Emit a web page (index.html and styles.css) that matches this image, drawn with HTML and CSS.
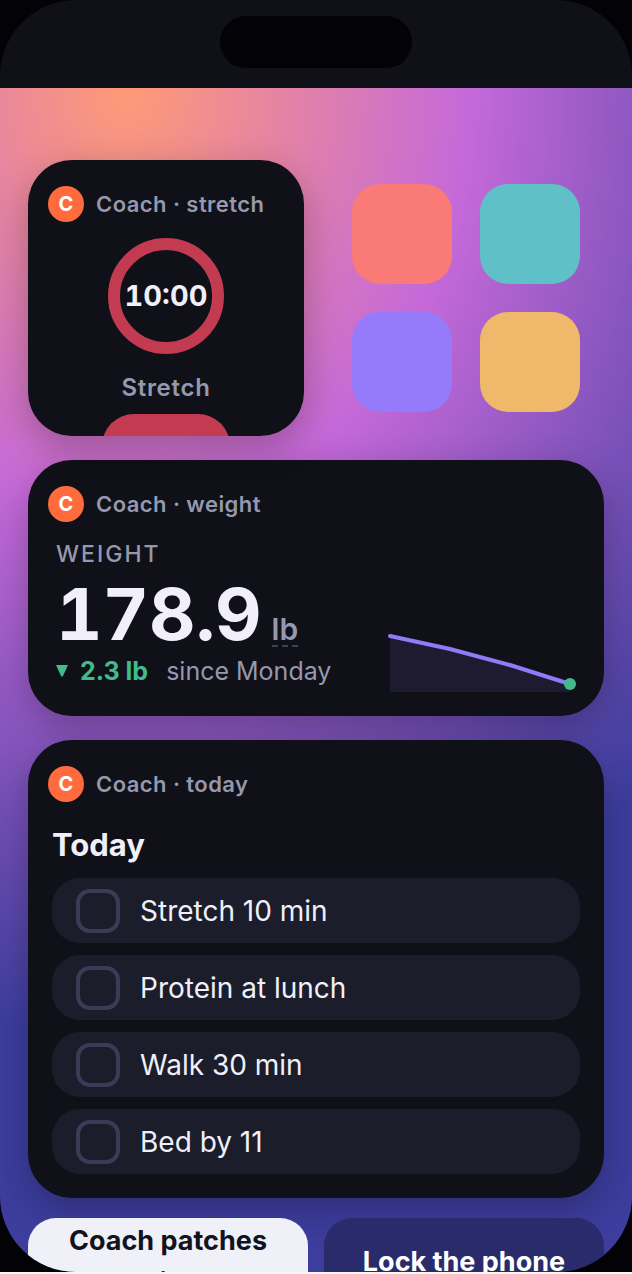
FILE: index.html
```html
<!DOCTYPE html>
<html lang="en">
  <head>
    <meta charset="UTF-8" />
    <meta name="viewport" content="width=device-width, initial-scale=1.0" />
    <title>Coach widgets</title>
    <link rel="stylesheet" href="styles.css">
  </head>
  <body>
    <div class="bezel">
      <div class="phone">
        <header class="status-bar">
          <div class="island"></div>
        </header>
        <main class="home">
          <div class="top-row">
            <section class="widget stretch">
              <div class="widget-header">
                <span class="logo">C</span>
                <span>Coach · stretch</span>
              </div>
              <div class="timer">10:00</div>
              <div class="timer-label">Stretch</div>
              <button class="timer-button" aria-label="Start stretch"></button>
            </section>
            <div class="apps">
              <div class="app coral"></div>
              <div class="app teal"></div>
              <div class="app violet"></div>
              <div class="app amber"></div>
            </div>
          </div>

          <section class="widget weight">
            <div class="widget-header">
              <span class="logo">C</span>
              <span>Coach · weight</span>
            </div>
            <div class="weight-body">
              <div class="weight-info">
                <div class="weight-label">WEIGHT</div>
                <div class="weight-value">
                  <span>178.9</span>
                  <span class="unit">lb</span>
                </div>
                <div class="trend">
                  <svg class="arrow" viewBox="0 0 12 12"><path d="M0 0h12L7 11q-1 1-2 0z" /></svg>
                  <span class="delta">2.3 lb</span>
                  <span>since Monday</span>
                </div>
              </div>
              <svg class="chart" viewBox="0 0 192 64">
                <path class="chart-area" d="M4 6L64 19L124 35L184 54V62H4z" />
                <path class="chart-line" d="M4 6L64 19L124 35L184 54" />
                <circle class="chart-dot" cx="184" cy="54" r="6" />
              </svg>
            </div>
          </section>

          <section class="widget today">
            <div class="widget-header">
              <span class="logo">C</span>
              <span>Coach · today</span>
            </div>
            <h2>Today</h2>
            <div class="tasks">
              <label class="task"><input type="checkbox" /> <span>Stretch 10 min</span></label>
              <label class="task"><input type="checkbox" /> <span>Protein at lunch</span></label>
              <label class="task"><input type="checkbox" /> <span>Walk 30 min</span></label>
              <label class="task"><input type="checkbox" /> <span>Bed by 11</span></label>
            </div>
          </section>

          <div class="actions">
            <button class="action primary">Coach patches<br />it</button>
            <button class="action">Lock the phone</button>
          </div>
        </main>
      </div>
    </div>
  </body>
</html>
```
FILE: styles.css
```css
* {
  box-sizing: border-box;
}
body {
  margin: 0;
  background-color: #fdf8ec;
  font-family: Inter, sans-serif;
  color: #f0effa;
}
.bezel {
  background-color: #030207;
}
.phone {
  display: flex;
  flex-direction: column;
  height: calc(100vh - 2px);
  overflow: hidden;
  border-radius: 76px;
  background-color: #0f1018;
}
.status-bar {
  flex: none;
  height: 88px;
  padding-top: 16px;
}
.island {
  width: 192px;
  height: 52px;
  margin: 0 auto;
  border-radius: 26px;
  background-color: #030207;
}
.home {
  flex: 1;
  min-height: 0;
  padding: 72px 28px 0;
  background: radial-gradient(120% 80% at 20% 0%, #ff9a76 0%, #c569d9 45%, #3c3d9d 100%);
}
.top-row {
  display: grid;
  grid-template-columns: 276px 1fr;
  gap: 24px;
  margin-bottom: 24px;
}
.widget {
  border-radius: 44px;
  background-color: #0f1018;
  box-shadow: 0 12px 36px rgba(0, 0, 0, 0.25);
}
.widget-header {
  display: flex;
  align-items: center;
  gap: 12px;
  padding: 26px 20px 0;
  font-size: 22px;
  line-height: 36px;
  font-weight: 600;
  letter-spacing: 0.02em;
  color: #9698ad;
}
.logo {
  width: 36px;
  height: 36px;
  border-radius: 50%;
  background-color: #ff6b3d;
  color: #ffffff;
  font-size: 20px;
  font-weight: 700;
  text-align: center;
}
.stretch {
  display: flex;
  flex-direction: column;
  height: 276px;
  overflow: hidden;
}
.timer {
  flex: none;
  align-self: center;
  display: flex;
  justify-content: center;
  width: 116px;
  height: 116px;
  margin-top: 16px;
  border: 12px solid #c23b50;
  border-radius: 50%;
  font-size: 29px;
  line-height: 92px;
  font-weight: 700;
  font-variant-numeric: tabular-nums;
}
.timer-label {
  margin-top: 18px;
  font-size: 24px;
  line-height: 32px;
  font-weight: 600;
  letter-spacing: 0.03em;
  text-align: center;
  color: #9698ad;
}
.timer-button {
  flex: none;
  align-self: center;
  width: 128px;
  height: 64px;
  margin-top: 10px;
  border: none;
  border-radius: 32px;
  background-color: #c23b50;
}
.apps {
  display: grid;
  grid-template-columns: 100px 100px;
  grid-auto-rows: 100px;
  gap: 28px;
  padding: 24px;
}
.app {
  border-radius: 28px;
}
.coral {
  background-color: #fa7a78;
}
.teal {
  background-color: #5fc0c7;
}
.violet {
  background-color: #957bf9;
}
.amber {
  background-color: #f0b86a;
}
.weight {
  margin-bottom: 24px;
  padding-bottom: 22px;
}
.weight-body {
  display: flex;
  justify-content: space-between;
  align-items: flex-end;
  padding: 18px 26px 0 28px;
}
.weight-info {
  padding-bottom: 8px;
}
.weight-label {
  font-size: 23px;
  line-height: 28px;
  font-weight: 500;
  letter-spacing: 2px;
  color: #9698ad;
}
.weight-value {
  display: flex;
  align-items: baseline;
  gap: 10px;
  margin-top: 10px;
  font-size: 72px;
  line-height: 72px;
  font-weight: 700;
  font-variant-numeric: tabular-nums;
}
.unit {
  border-bottom: 2px dashed #3f405a;
  font-size: 30px;
  line-height: 32px;
  font-weight: 600;
  color: #9698ad;
}
.trend {
  display: flex;
  align-items: center;
  margin-top: 6px;
  font-size: 25px;
  line-height: 30px;
  color: #9698ad;
}
.arrow {
  width: 12px;
  height: 12px;
  margin-right: 12px;
  fill: #42ba8c;
}
.delta {
  margin-right: 18px;
  font-weight: 700;
  color: #42ba8c;
}
.chart {
  width: 192px;
  height: 64px;
}
.chart-area {
  fill: #1e1b30;
}
.chart-line {
  fill: none;
  stroke: #8f7bf8;
  stroke-width: 4;
  stroke-linecap: round;
  stroke-linejoin: round;
}
.chart-dot {
  fill: #42ba8c;
}
.today {
  margin-bottom: 20px;
  padding-bottom: 24px;
}
h2 {
  margin: 24px 24px 14px;
  font-size: 31px;
  line-height: 38px;
  font-weight: 700;
}
.tasks {
  display: flex;
  flex-direction: column;
  gap: 12px;
  padding: 0 24px;
}
.task {
  display: flex;
  align-items: center;
  gap: 20px;
  height: 65px;
  padding: 0 24px;
  border-radius: 28px;
  background-color: #1b1d2a;
  font-size: 28px;
}
.task input {
  appearance: none;
  width: 44px;
  height: 44px;
  margin: 0;
  border: 4px solid #3b3b58;
  border-radius: 14px;
}
.actions {
  display: grid;
  grid-template-columns: 1fr 1fr;
  gap: 16px;
}
.action {
  height: 88px;
  padding: 0;
  border: none;
  border-radius: 28px;
  background-color: #292b6b;
  font-family: inherit;
  font-size: 27px;
  line-height: 42px;
  font-weight: 700;
  color: #ffffff;
}
.primary {
  background-color: #eff0f8;
  color: #12131f;
}
```
